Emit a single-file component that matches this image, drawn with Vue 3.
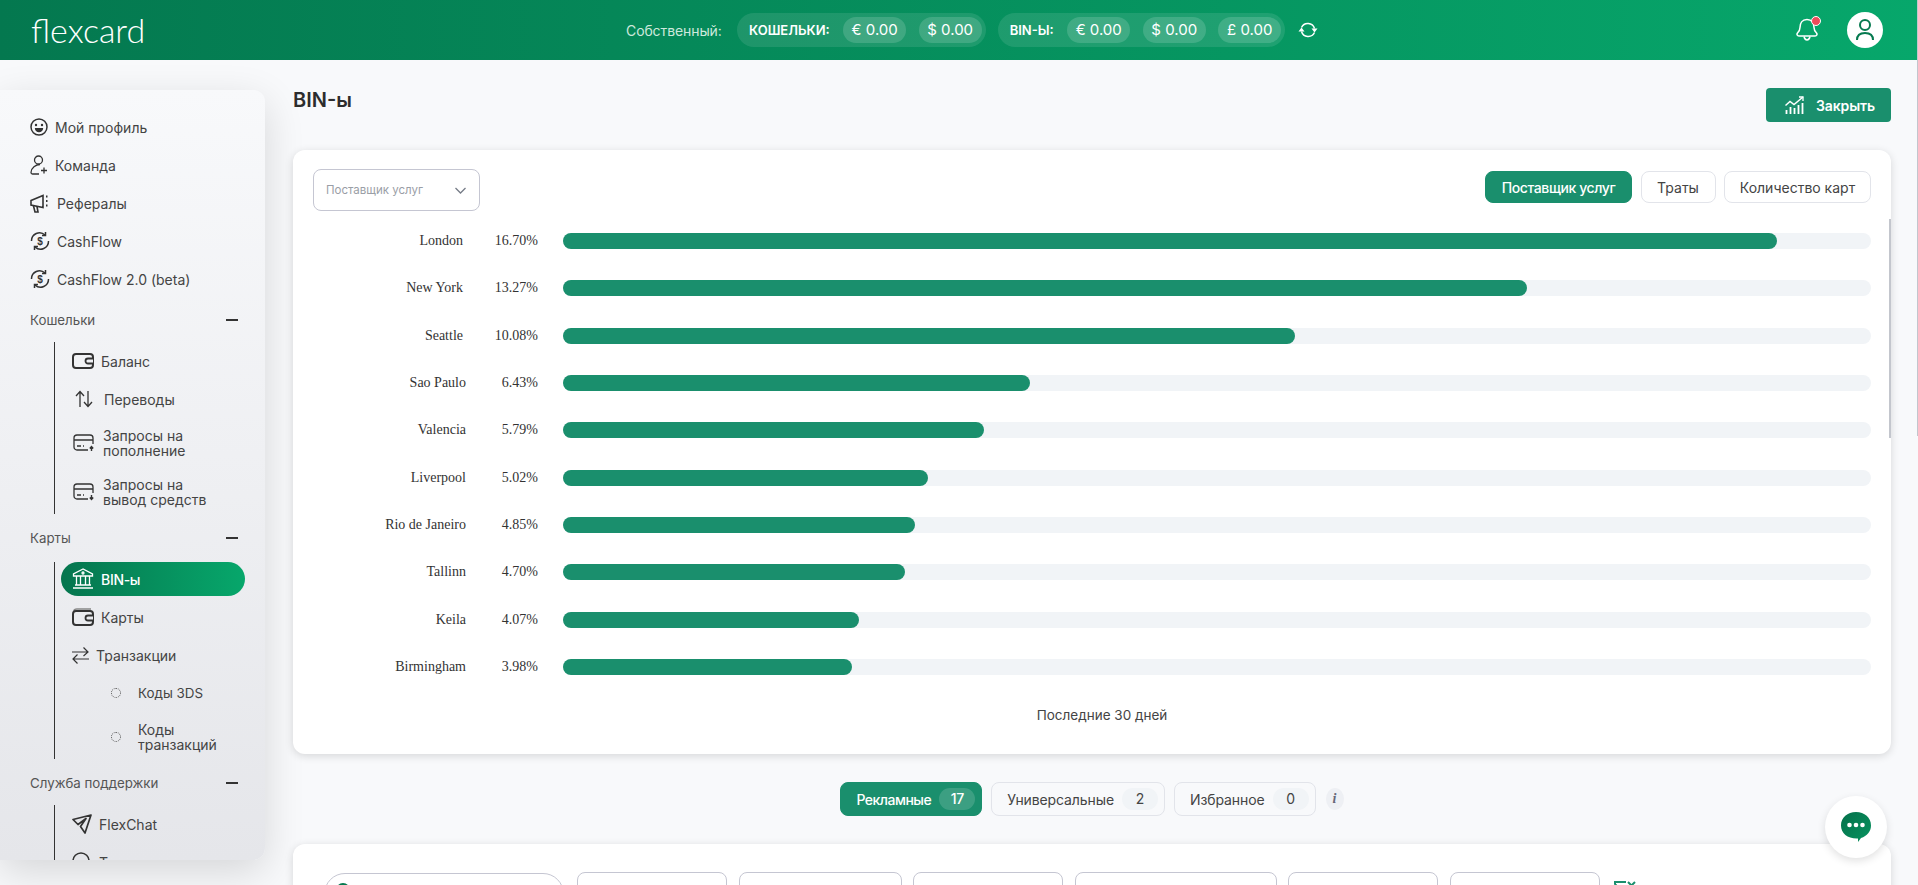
<template>
  <div class="page">
    <header class="topbar">
      <div class="logo">flexcard</div>
      <div class="balances">
        <span class="own">Собственный:</span>
        <div class="bal-group">
          <span class="bal-label">КОШЕЛЬКИ:</span>
          <span v-for="v in walletBalances" :key="v" class="bal-pill">{{ v }}</span>
        </div>
        <div class="bal-group">
          <span class="bal-label">BIN-Ы:</span>
          <span v-for="v in binBalances" :key="v" class="bal-pill">{{ v }}</span>
        </div>
        <svg class="refresh" width="20" height="20" viewBox="0 0 20 20" fill="none" stroke="#fff" stroke-width="1.5">
          <path d="M3.500 7.500A7 7 0 0 1 16.500 8.500" />
          <path d="M16.500 12.500A7 7 0 0 1 3.500 11.500" />
          <path d="M13.500 8.500h6l-3 4z" fill="#fff" stroke="none" />
          <path d="M.5 11.500h6l-3-4z" fill="#fff" stroke="none" />
        </svg>
      </div>
      <div class="top-right">
        <div class="bell">
          <svg width="22" height="24" viewBox="0 0 22 24" fill="none" stroke="#fff" stroke-width="1.500">
            <path d="M11 1.500C6 1.500 4 5.500 4 9.500c0 3-1 4-2.500 5.500-1.200 1.500 0 3 2 3h15c2 0 3.200-1.500 2-3C19 13.500 18 12.500 18 9.500 18 5.500 16 1.500 11 1.500z" />
            <path d="M8 18.500c.5 2.500 1.500 3.500 3 3.500s2.500-1 3-3.500" />
          </svg>
          <span class="bell-dot"></span>
        </div>
        <div class="avatar">
          <svg width="20" height="24" viewBox="0 0 20 24" fill="none" stroke="#05794f" stroke-width="2">
            <circle cx="10" cy="7" r="5" />
            <path d="M2 22c0-5 3.500-7 8-7s8 2 8 7" />
          </svg>
        </div>
      </div>
    </header>

    <div class="body">
      <aside class="sidebar">
        <a class="item">
          <svg class="ic" width="18" height="18" viewBox="0 0 18 18" fill="none" stroke="#333" stroke-width="1.500">
            <circle cx="9" cy="9" r="8" />
            <circle cx="6" cy="7" r="1.200" fill="#333" stroke="none" />
            <circle cx="12" cy="7" r="1.200" fill="#333" stroke="none" />
            <path d="M4.800 10h8.400c0 2.500-1.800 4.200-4.200 4.200S4.800 12.500 4.800 10z" fill="#333" stroke="none" />
          </svg>
          <span class="g7">Мой профиль</span>
        </a>
        <a class="item">
          <svg class="ic" width="18" height="20" viewBox="0 0 18 20" fill="none" stroke="#333" stroke-width="1.300">
            <circle cx="8.500" cy="5" r="4" />
            <path d="M10 9.500C6 9.500 1 13 1 17.500c0 1 .5 1.500 1.500 1.500H9" />
            <path d="M14 12.500v6M11 15.500h6" />
          </svg>
          <span class="g7">Команда</span>
        </a>
        <a class="item">
          <svg class="ic" width="20" height="20" viewBox="0 0 20 20" fill="none" stroke="#333" stroke-width="1.600">
            <path d="M1 7.500l12-5v12l-12-2.500z" />
            <path d="M3.500 13l1.500 6h3l-1-5.500" />
            <path d="M16 3.500h1.500M16 8h1.500M16 12.500h1.500" stroke-width="1.800" />
          </svg>
          <span class="g7">Рефералы</span>
        </a>
        <a class="item">
          <svg class="ic" width="20" height="20" viewBox="0 0 20 20" fill="none" stroke="#333" stroke-width="1.500">
            <path d="M1.500 10a8 8 0 0 1 13.500-6" />
            <path d="M18.500 10a8 8 0 0 1-13.500 6" />
            <path d="M15.500 1v3.500H12M4.500 19v-3.500H8" />
            <text x="10" y="13.500" text-anchor="middle" class="dollar">$</text>
          </svg>
          <span class="g7">CashFlow</span>
        </a>
        <a class="item">
          <svg class="ic" width="20" height="20" viewBox="0 0 20 20" fill="none" stroke="#333" stroke-width="1.500">
            <path d="M1.500 10a8 8 0 0 1 13.500-6" />
            <path d="M18.500 10a8 8 0 0 1-13.500 6" />
            <path d="M15.500 1v3.500H12M4.500 19v-3.500H8" />
            <text x="10" y="13.500" text-anchor="middle" class="dollar">$</text>
          </svg>
          <span class="g7">CashFlow 2.0 (beta)</span>
        </a>

        <div class="heading"><span>Кошельки</span><i class="minus"></i></div>
        <div class="sub">
          <a class="item">
            <svg width="22" height="16" viewBox="0 0 22 16" fill="none" stroke="#333" stroke-width="2">
              <rect x="1" y="1" width="20" height="14" rx="3" />
              <path d="M21 5.500h-5a2.500 2.500 0 0 0 0 5h5" fill="#eff0f4" stroke-width="1.800" />
            </svg>
            <span class="g7">Баланс</span>
          </a>
          <a class="item pad3">
            <svg width="18" height="18" viewBox="0 0 18 18" fill="none" stroke="#333" stroke-width="1.300">
              <path d="M5 17V2M1 6l4-4.500L9 6" />
              <path d="M13 1v15M9 12l4 4.500 4-4.500" />
            </svg>
            <span class="g11">Переводы</span>
          </a>
          <a class="item tall t1">
            <svg width="22" height="18" viewBox="0 0 22 18" fill="none" stroke="#333" stroke-width="1.300">
              <path d="M15 16H4a3 3 0 0 1-3-3V4a3 3 0 0 1 3-3h13a3 3 0 0 1 3 3v6" />
              <path d="M1 6h19M4 12h4M10 12h1" />
              <path d="M18.500 17v-4M16.800 14.500l1.700-2 1.700 2" stroke-width="1.400" />
            </svg>
            <span class="g8">Запросы на<br />пополнение</span>
          </a>
          <a class="item tall t2">
            <svg width="22" height="18" viewBox="0 0 22 18" fill="none" stroke="#333" stroke-width="1.300">
              <path d="M15 16H4a3 3 0 0 1-3-3V4a3 3 0 0 1 3-3h13a3 3 0 0 1 3 3v6" />
              <path d="M1 6h19M4 12h4M10 12h1" />
              <path d="M18.500 12v4M16.800 14.500l1.700 2 1.700-2" stroke-width="1.400" />
            </svg>
            <span class="g8">Запросы на<br />вывод средств</span>
          </a>
        </div>

        <div class="heading"><span>Карты</span><i class="minus"></i></div>
        <div class="sub sub-cards">
          <a class="item active">
            <svg width="22" height="22" viewBox="0 0 22 22" fill="none" stroke="#fff" stroke-width="1.300">
              <path d="M11 1L1.500 6v2h19V6z" />
              <circle cx="11" cy="5" r="1" />
              <path d="M4.500 8v9M8.500 8v9M13.500 8v9M17.500 8v9M3 17h16M1 20h20" />
            </svg>
            <span class="g7">BIN-ы</span>
          </a>
          <a class="item">
            <svg width="22" height="18" viewBox="0 0 22 18" fill="none" stroke="#333" stroke-width="2">
              <path d="M2 3c0-1 1-2 3-2h14" stroke="#888" stroke-width="1.500" />
              <rect x="1" y="3" width="20" height="14" rx="3" />
              <path d="M21 7.500h-5a2.500 2.500 0 0 0 0 5h5" fill="#e9eaee" stroke-width="1.800" />
            </svg>
            <span class="g7">Карты</span>
          </a>
          <a class="item">
            <svg width="17" height="17" viewBox="0 0 17 17" fill="none" stroke="#333" stroke-width="1.200">
              <path d="M0 5h16M11.500 .5L16 5l-4.500 4" />
              <path d="M17 12H1M5.500 7.500L1 12l4.500 4.500" />
            </svg>
            <span class="g7">Транзакции</span>
          </a>
          <a class="item leaf">
            <i class="dot"></i><span class="code3">Коды 3DS</span>
          </a>
          <a class="item tall leaf t3">
            <i class="dot"></i><span>Коды<br />транзакций</span>
          </a>
        </div>

        <div class="heading"><span>Служба поддержки</span><i class="minus"></i></div>
        <div class="sub">
          <a class="item">
            <svg width="20" height="20" viewBox="0 0 20 20" fill="none" stroke="#333" stroke-width="1.700" stroke-linejoin="round">
              <path d="M19 1L1 5.500l5 5 8-6-5.500 8 4.500 6.500z" />
            </svg>
            <span class="g7">FlexChat</span>
          </a>
          <a class="item">
            <svg width="20" height="20" viewBox="0 0 20 20" fill="none" stroke="#333" stroke-width="1.500">
              <circle cx="9" cy="9" r="8" />
            </svg>
            <span class="g7">Тикеты</span>
          </a>
        </div>
      </aside>

      <main class="content">
        <div class="title-row">
          <h1>BIN-ы</h1>
          <button class="close-btn">
            <svg width="19" height="18" viewBox="0 0 19 18" fill="none" stroke="#fff" stroke-width="1.500">
              <path d="M.5 9.500l4.500-4 4 3L18 1" />
              <path d="M14 1h4v4" stroke-width="1.300" />
              <path d="M1.500 14v4M5.500 11v7M9.500 12v6M13.500 9v9M17.500 7v11" stroke-width="1.800" />
            </svg>
            Закрыть
          </button>
        </div>

        <section class="card chart-card">
          <div class="chart-top">
            <div class="select">
              <span>Поставщик услуг</span>
              <svg width="11" height="7" viewBox="0 0 11 7" fill="none" stroke="#767c87" stroke-width="1.300">
                <path d="M.5 1l5 5 5-5" />
              </svg>
            </div>
            <div class="tabs">
              <button class="tab on">Поставщик услуг</button>
              <button class="tab short">Траты</button>
              <button class="tab">Количество карт</button>
            </div>
          </div>
          <div class="rows">
            <div v-for="row in rows" :key="row.name" class="row">
              <span class="name" :class="{ wide: row.value >= 10 }">{{ row.name }}</span>
              <span class="pct">{{ row.value.toFixed(2) }}%</span>
              <div class="track">
                <div class="fill" :style="{ width: (row.value / 18) * 100 + '%' }"></div>
              </div>
            </div>
          </div>
          <div class="caption">Последние 30 дней</div>
          <i class="chart-scroll"></i>
        </section>

        <div class="kinds">
          <button v-for="k in kinds" :key="k.label" class="kind" :class="{ on: k.active }">
            {{ k.label }}<span class="count">{{ k.count }}</span>
          </button>
          <span class="info">i</span>
        </div>

        <section class="card filters">
          <div class="search">
            <svg width="16" height="16" viewBox="0 0 16 16" fill="none" stroke="#05794f" stroke-width="2">
              <circle cx="7" cy="7" r="6" />
              <path d="M11.500 11.500L15 15" />
            </svg>
          </div>
          <div class="box w150"></div>
          <div class="box w163"></div>
          <div class="box w150"></div>
          <div class="box w202"></div>
          <div class="box w150"></div>
          <div class="box w150"></div>
          <svg class="clear" width="22" height="20" viewBox="0 0 22 20" fill="none" stroke="#1a8f6d" stroke-width="2">
            <path d="M12 1H1v2l6 7v9l4-2" />
            <path d="M14 1l7 7M21 1l-7 7" />
          </svg>
        </section>
      </main>
    </div>

    <div class="chat">
      <svg width="30" height="30" viewBox="0 0 30 30">
        <defs>
          <linearGradient id="chatFill" x1="0" y1="0" x2="1" y2="1">
            <stop offset="0" stop-color="#05704b" />
            <stop offset="1" stop-color="#07935f" />
          </linearGradient>
        </defs>
        <path d="M15 0c8.500 0 15 5.500 15 13.500 0 6-4 10.500-10 12.500l-3 4v-3.500C7 27 0 21.500 0 13.500 0 5.500 6.500 0 15 0z" fill="url(#chatFill)" />
        <circle cx="8.500" cy="13" r="2.300" fill="#fff" />
        <circle cx="15" cy="13" r="2.300" fill="#fff" />
        <circle cx="21.500" cy="13" r="2.300" fill="#fff" />
      </svg>
    </div>
    <i class="page-scroll"></i>
  </div>
</template>

<script setup>
const walletBalances = ['€ 0.00', '$ 0.00']
const binBalances = ['€ 0.00', '$ 0.00', '£ 0.00']

const rows = [
  { name: 'London', value: 16.7 },
  { name: 'New York', value: 13.27 },
  { name: 'Seattle', value: 10.08 },
  { name: 'Sao Paulo', value: 6.43 },
  { name: 'Valencia', value: 5.79 },
  { name: 'Liverpool', value: 5.02 },
  { name: 'Rio de Janeiro', value: 4.85 },
  { name: 'Tallinn', value: 4.7 },
  { name: 'Keila', value: 4.07 },
  { name: 'Birmingham', value: 3.98 }
]

const kinds = [
  { label: 'Рекламные', count: 17, active: true },
  { label: 'Универсальные', count: 2, active: false },
  { label: 'Избранное', count: 0, active: false }
]
</script>

<style>
html, body {
  margin: 0;
  background: #f8f9fb;
}
</style>

<style scoped>
.page {
  position: relative;
  height: 885px;
  overflow: hidden;
  background: #f8f9fb;
  font-family: Inter, "Noto Sans", sans-serif;
  font-size: 14px;
  color: #444;
}

/* top bar */
.topbar {
  display: flex;
  align-items: center;
  height: 60px;
  background: linear-gradient(90deg, #04784f, #07a76b);
  color: #fff;
}
.logo {
  width: 116px;
  margin-left: 31px;
  font-family: Lato, sans-serif;
  font-weight: 300;
  font-size: 34px;
  line-height: 1;
}
.balances {
  display: flex;
  align-items: center;
  margin-left: 479px;
}
.own {
  width: 111px;
  font-size: 14px;
  letter-spacing: -.1px;
  color: #cde8dc;
}
.bal-group {
  display: flex;
  align-items: center;
  gap: 12.500px;
  height: 34px;
  padding: 0 4px 0 12px;
  margin-right: 12px;
  border-radius: 17px;
  background: rgba(255, 255, 255, .1);
}
.bal-group .bal-label {
  margin-right: 1px;
}
.bal-label {
  font-size: 13px;
  font-weight: 600;
}
.bal-pill {
  width: 63px;
  height: 26px;
  line-height: 26px;
  text-align: center;
  font-size: 15px;
  border-radius: 13px;
  background: rgba(255, 255, 255, .15);
}
.refresh {
  margin-left: 1px;
}
.top-right {
  display: flex;
  align-items: center;
  gap: 29px;
  margin-left: auto;
  padding-right: 35px;
}
.bell {
  position: relative;
  width: 22px;
  height: 24px;
}
.bell-dot {
  position: absolute;
  top: -2px;
  right: -3px;
  width: 8px;
  height: 8px;
  border-radius: 50%;
  background: #ee4b5a;
  border: 1px solid #fff;
}
.avatar {
  display: flex;
  align-items: center;
  justify-content: center;
  width: 36px;
  height: 36px;
  border-radius: 50%;
  background: #fff;
}

/* sidebar */
.body {
  display: flex;
}
.sidebar {
  flex: none;
  box-sizing: border-box;
  width: 265px;
  height: 770px;
  margin-top: 30px;
  padding-top: 18px;
  overflow: hidden;
  border-radius: 0 12px 12px 0;
  background: linear-gradient(180deg, #f8f9fb, #e5e6ea);
  box-shadow: 0 12px 40px rgba(0, 0, 0, .14);
}
.item {
  display: flex;
  align-items: center;
  height: 38px;
  padding-left: 30px;
  line-height: 15px;
}
.ic {
  flex: none;
}
.g7 { margin-left: 7px; }
.g8 { margin-left: 8px; }
.g11 { margin-left: 11px; }
.heading {
  display: flex;
  align-items: center;
  justify-content: space-between;
  height: 44px;
  padding: 0 27px 0 30px;
  font-size: 13.300px;
  color: #555;
}
.minus {
  width: 12px;
  height: 2px;
  background: #333;
}
.sub {
  margin: 2px 0 0 54px;
  border-left: 1px solid #333;
}
.sub .item {
  padding-left: 17px;
}
.sub .item:first-child {
  margin-top: -2px;
}
.sub-cards .item:first-child {
  margin-top: 0;
}
.sub .pad3 {
  padding-left: 20px;
}
.tall {
  height: 45px;
}
.t1 { margin-top: 2px; }
.t2 { margin-top: 4px; }
.t3 { margin-top: 2px; }
.sub .t1, .sub .t2 {
  padding-left: 18px;
}
.sub + .heading {
  margin-top: 2px;
}
.sub .active {
  box-sizing: border-box;
  width: 184px;
  height: 34px;
  margin: 0 0 2px 6px;
  padding-left: 11px;
  border-radius: 17px;
  background: linear-gradient(90deg, #05754e, #07a76b);
  color: #fff;
  font-weight: 500;
  letter-spacing: -.3px;
}
.sub .leaf {
  padding-left: 56px;
}
.code3 {
  font-size: 13.400px;
}
.dot {
  flex: none;
  box-sizing: border-box;
  width: 10px;
  height: 10px;
  margin-right: 17px;
  border: 1px dotted #555;
  border-radius: 50%;
}

/* main */
.content {
  box-sizing: border-box;
  width: 1598px;
  margin-left: 28px;
}
.title-row {
  display: flex;
  justify-content: space-between;
  align-items: flex-start;
  height: 90px;
  padding-top: 28px;
  box-sizing: border-box;
}
h1 {
  margin: 0;
  font-size: 20px;
  font-weight: 600;
  line-height: 24px;
  color: #2d2d2d;
}
.close-btn {
  display: flex;
  align-items: center;
  gap: 12px;
  width: 125px;
  height: 34px;
  padding: 0 0 0 19px;
  border: 0;
  border-radius: 4px;
  background: #1a8f6d;
  color: #fff;
  font: 600 14px Inter, sans-serif;
  letter-spacing: -.1px;
}
.card {
  position: relative;
  border-radius: 12px;
  background: #fff;
  box-shadow: 0 2px 8px rgba(0, 0, 0, .14);
}
.chart-card {
  box-sizing: border-box;
  height: 604px;
  padding: 19px 20px 0;
}
.chart-top {
  display: flex;
  justify-content: space-between;
  align-items: flex-start;
}
.select {
  display: flex;
  align-items: center;
  justify-content: space-between;
  box-sizing: border-box;
  width: 167px;
  height: 42px;
  padding: 0 13px 0 12px;
  border: 1px solid #c5c6d2;
  border-radius: 8px;
  font-size: 11.500px;
  color: #9a9ea6;
}
.tabs {
  display: flex;
  gap: 8.500px;
  margin-top: 2px;
}
.tab {
  box-sizing: border-box;
  width: 147px;
  height: 32px;
  padding: 0;
  border: 1px solid #e2e4ea;
  border-radius: 8px;
  background: #fff;
  color: #444;
  font: 14px Inter, sans-serif;
}
.tab.short {
  width: 75px;
}
.tab.on {
  background: #1a8f6d;
  border-color: #1a8f6d;
  color: #fff;
  font-weight: 500;
  letter-spacing: -.4px;
}
.rows {
  margin-top: 6.500px;
}
.row {
  display: flex;
  align-items: center;
  height: 47.330px;
  font-family: "Liberation Serif", serif;
  color: #333;
}
.name {
  box-sizing: border-box;
  width: 153px;
  text-align: right;
}
.name.wide {
  padding-right: 3px;
}
.pct {
  width: 72px;
  text-align: right;
}
.track {
  width: 1308px;
  height: 16px;
  margin-left: 25px;
  border-radius: 8px;
  background: #f1f4f7;
}
.fill {
  height: 100%;
  border-radius: 8px;
  background: #1a8f6d;
}
.caption {
  margin-top: 6.500px;
  padding-left: 20px;
  line-height: 36px;
  text-align: center;
  font-size: 13.500px;
  color: #444;
}
.chart-scroll {
  position: absolute;
  top: 69px;
  right: 0;
  width: 2px;
  height: 219px;
  background: #c3c6cd;
}
.kinds {
  display: flex;
  justify-content: center;
  align-items: center;
  gap: 9px;
  margin: 28px 0;
}
.kind {
  display: flex;
  align-items: center;
  gap: 8px;
  height: 34px;
  padding: 0 6px 0 15px;
  border: 1px solid #e2e4ea;
  border-radius: 8px;
  background: transparent;
  color: #444;
  font: 14px Inter, sans-serif;
  letter-spacing: -.1px;
}
.kind.on {
  background: #1a8f6d;
  border-color: #1a8f6d;
  color: #fff;
  font-weight: 500;
  letter-spacing: -.5px;
}
.count {
  width: 36px;
  height: 22px;
  line-height: 22px;
  text-align: center;
  border-radius: 11px;
  background: #f1f4f7;
}
.kind.on .count {
  background: rgba(255, 255, 255, .15);
}
.info {
  width: 18px;
  height: 22px;
  margin-left: 1px;
  text-align: center;
  border-radius: 50%;
  background: #eef0f4;
  color: #667;
  font: italic 700 14px/22px "Liberation Serif", serif;
}
.filters {
  display: flex;
  align-items: flex-start;
  gap: 11.500px;
  height: 100px;
  padding: 28px 0 0 31px;
}
.search {
  box-sizing: border-box;
  width: 240px;
  height: 42px;
  margin: 1px 1.500px 0 0;
  padding: 9px 0 0 11px;
  border: 1px solid #c5c6d2;
  border-radius: 21px;
}
.box {
  box-sizing: border-box;
  height: 42px;
  border: 1px solid #c5c6d2;
  border-radius: 8px;
}
.w150 { width: 150px; }
.w163 { width: 163px; }
.w202 { width: 202px; }
.clear {
  margin: 9px 0 0 3px;
}
.chat {
  position: absolute;
  right: 31px;
  bottom: 27px;
  display: flex;
  align-items: center;
  justify-content: center;
  width: 62px;
  height: 62px;
  border-radius: 50%;
  background: #fff;
  box-shadow: 0 3px 8px rgba(0, 0, 0, .12);
}
.page-scroll {
  position: absolute;
  top: 0;
  right: 0;
  width: 1px;
  height: 436px;
  background: #c3c6cd;
}
.dollar {
  font: 700 10px "Liberation Sans", sans-serif;
  fill: #333;
  stroke: none;
}
</style>
